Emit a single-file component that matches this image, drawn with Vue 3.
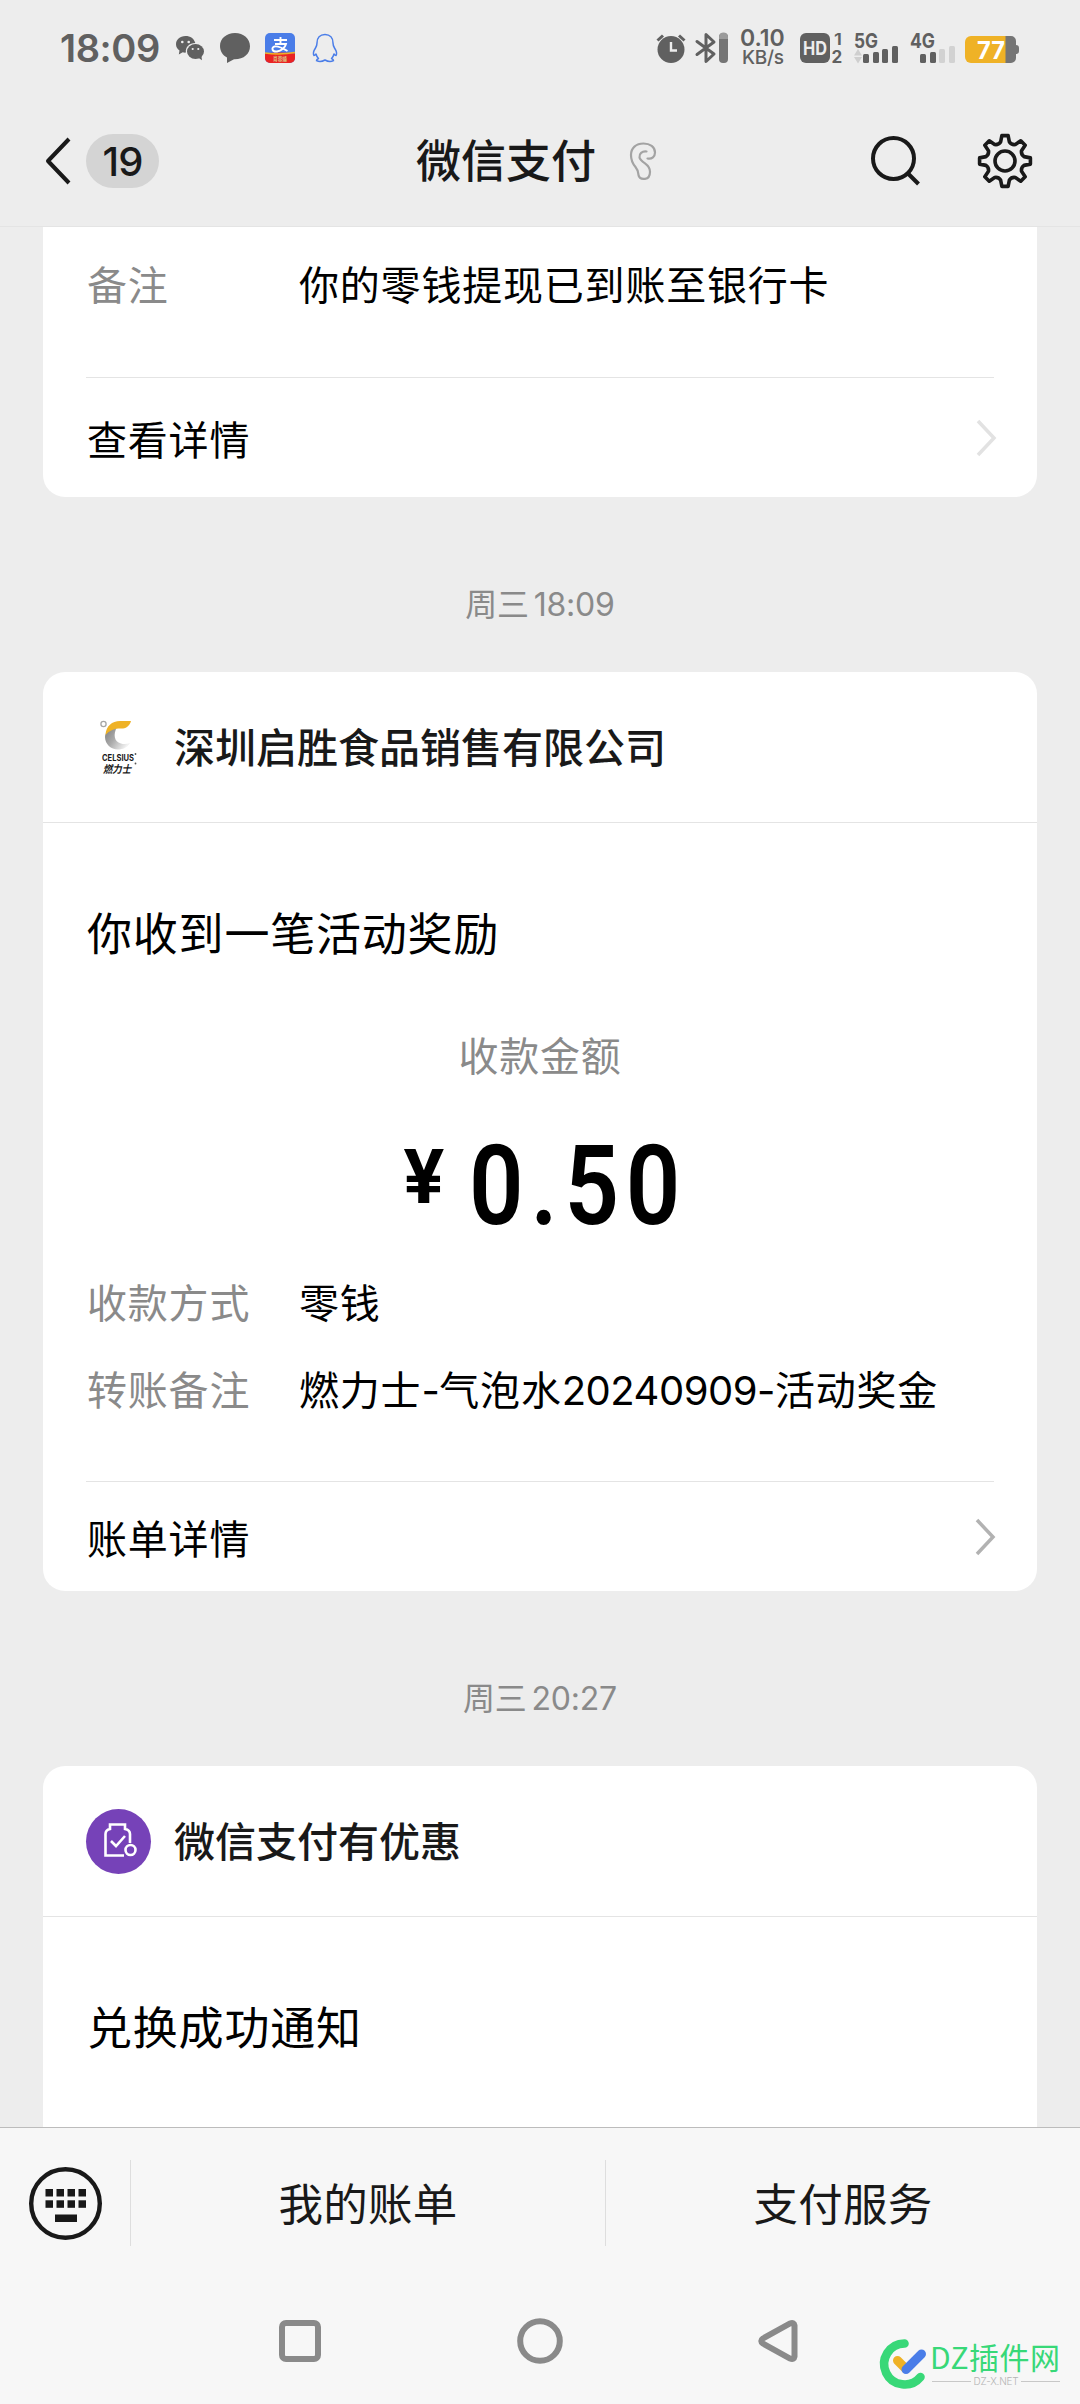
<script setup>
const signalBars = [
  { x: 9, h: 9 },
  { x: 19, h: 11 },
  { x: 28, h: 14 },
  { x: 38, h: 17 },
]
const keys = [0, 1, 2, 3].flatMap((c) => [0, 1].map((r) => ({ x: 16.5 + c * 11, y: 22 + r * 11.3 })))

// Outline of the settings cog: eight rounded teeth around the centre (28, 28).
const teeth = 8
const point = (radius, degrees) => {
  const a = (degrees * Math.PI) / 180
  return `${(28 + radius * Math.sin(a)).toFixed(2)} ${(28 - radius * Math.cos(a)).toFixed(2)}`
}
const gearPath =
  Array.from({ length: teeth }, (_, i) => {
    const a = (i * 360) / teeth
    return `${i ? 'L' : 'M'}${point(19.5, a - 13)} L${point(25.6, a - 7)} L${point(25.6, a + 7)} L${point(19.5, a + 13)} Q${point(17.2, a + 22.5)} ${point(19.5, a + 32)}`
  }).join(' ') + 'Z'

const payment = [
  { label: '收款方式', value: '零钱' },
  { label: '转账备注', value: '燃力士-气泡水20240909-活动奖金' },
]
// Latin runs are set tighter than the Chinese text around them.
const runs = (text) => text.split(/([-\d]+)/).filter(Boolean).map((t) => ({ t, latin: /^[-\d]/.test(t) }))
</script>

<template>
  <div class="screen">
    <header class="top">
      <div class="status">
        <div class="status-left">
          <span class="clock">18:09</span>
          <svg class="s-wechat" width="30" height="30" viewBox="0 0 30 30">
            <path d="M10.5 3C4.700 3 1 6.800 1 11.200c0 2.700 1.300 4.800 3.500 6.400L3.800 21.500l3.900-2.200c1 .3 2 .4 3.200.3C10.200 14 14.500 10 20.300 10 19 5.500 15.500 3 10.500 3z" fill="#606060" />
            <ellipse cx="20.500" cy="18.500" rx="8.500" ry="7.500" fill="#606060" />
            <path d="M23 24.500l4 2.800-.6-4.300z" fill="#606060" />
            <g fill="#ededed"><circle cx="7.300" cy="9" r="1.300" /><circle cx="13.700" cy="9" r="1.300" /><circle cx="17.700" cy="16" r="1.100" /><circle cx="23.300" cy="16" r="1.100" /></g>
          </svg>
          <svg class="s-chat" width="30" height="30" viewBox="0 0 30 30">
            <path d="M15 0C6.500 0 0 5.500 0 13c0 5 2.600 9.300 7 11.500V30l7-3.800C23.500 26.500 30 21 30 13.200 30 5.500 23.500 0 15 0z" fill="#606060" />
          </svg>
          <svg class="s-alipay" width="30" height="30" viewBox="0 0 30 30">
            <rect width="30" height="30" rx="5" fill="#4a7de8" />
            <path d="M0 20.500Q15 18.500 30 20.500V25a5 5 0 0 1-5 5H5a5 5 0 0 1-5-5z" fill="#ea2323" />
            <path d="M0 20Q15 22 30 19.500" fill="none" stroke="#efb226" stroke-width="1.500" />
            <path d="M9 7h13M15.500 4v7M10 11h11c-1 4-5 7-9 7.500-5 .5-6-4-2.500-5 4-1 8 1.500 13 4.500" fill="none" stroke="#fff" stroke-width="1.900" />
            <text x="8" y="27.500" font-size="6" textLength="14" lengthAdjust="spacingAndGlyphs" font-weight="700" fill="#dcb77c">肖蓉蛹</text>
          </svg>
          <svg class="s-qq" width="26" height="30" viewBox="0 0 26 30">
            <path d="M13 1.500C8 1.500 5 5 5 10c0 2-.5 3.500-1.500 5C1.500 18 1 21 2 22.500c.8 0 1.500-.8 2-1.500.5 2 1 3.200 2.500 4.500-1.500.6-2 1.200-2 2.200 2 1 6 .8 8.500-.7 2.500 1.500 6.500 1.700 8.500.7 0-1-.5-1.600-2-2.200 1.500-1.300 2-2.500 2.500-4.500.5.7 1.200 1.500 2 1.500 1-1.500.5-4.500-1.500-7.500-1-1.500-1.500-3-1.500-5 0-5-3-8.500-8-8.500z" fill="none" stroke="#4a7de8" stroke-width="1.500" stroke-linejoin="round" />
          </svg>
        </div>
        <div class="status-right">
          <svg width="30" height="30" viewBox="0 0 30 30">
            <circle cx="15" cy="16.500" r="13.500" fill="#606060" />
            <path d="M1.500 7.500L7 2.500M28.500 7.500L23 2.500" stroke="#606060" stroke-width="3" />
            <path d="M15 9v8.500h6" fill="none" stroke="#ededed" stroke-width="2.400" />
          </svg>
          <svg class="s-bt" width="33" height="30" viewBox="0 0 33 30">
            <path d="M2 8.500L19 21l-8 7.500v-27L19 9 2 21.500" fill="none" stroke="#606060" stroke-width="3" stroke-linejoin="round" stroke-linecap="round" />
            <rect x="24" y="0" width="9" height="30" rx="4" fill="#757575" />
            <path d="M24 6V4a4 4 0 0 1 9 0v2z" fill="#9b9b9b" />
          </svg>
          <div class="speed"><span>0.10</span><span class="unit">KB/s</span></div>
          <svg class="s-hd" width="43" height="32" viewBox="0 0 43 32">
            <rect width="30" height="30" rx="6" fill="#606060" />
            <text x="3" y="22" font-size="19" font-weight="700" textLength="24" lengthAdjust="spacingAndGlyphs" fill="#ededed">HD</text>
            <text x="34" y="12" font-size="16" font-weight="600" textLength="8" lengthAdjust="spacingAndGlyphs" fill="#606060">1</text>
            <text x="31.500" y="29.500" font-size="17" font-weight="700" fill="#606060">2</text>
          </svg>
          <svg class="s-sim" width="46" height="32" viewBox="0 0 46 32">
            <text x="0" y="14.500" font-size="20" font-weight="700" textLength="24" lengthAdjust="spacingAndGlyphs" fill="#606060">5G</text>
            <path d="M0 22.500L4 16l4 6.500zM0 24l4 6.500L8 24z" fill="#cfcfcf" />
            <rect v-for="b in signalBars" :key="b.x" :x="b.x" :y="30 - b.h" width="6" :height="b.h" rx="1.500" fill="#606060" />
          </svg>
          <svg class="s-sim2" width="46" height="32" viewBox="0 0 46 32">
            <text x="0" y="14.500" font-size="20" font-weight="700" textLength="25" lengthAdjust="spacingAndGlyphs" fill="#606060">4G</text>
            <rect v-for="(b, i) in signalBars" :key="b.x" :x="b.x + 1" :y="30 - b.h" width="6" :height="b.h" rx="1.500" :fill="i < 2 ? '#606060' : '#d2d2d2'" />
          </svg>
          <svg class="s-bat" width="55" height="30" viewBox="0 0 55 30">
            <path d="M40 3h6a5 5 0 0 1 5 5v4q3 0 3 3v3q0 3-3 3v4a5 5 0 0 1-5 5h-6z" fill="#757575" />
            <path d="M6 3h34.500v27H6a6 6 0 0 1-6-6V9a6 6 0 0 1 6-6z" fill="#efb226" />
            <text x="12" y="25.500" font-size="24" font-weight="700" textLength="28" lengthAdjust="spacingAndGlyphs" fill="#fff">77</text>
          </svg>
        </div>
      </div>
      <div class="nav">
        <div class="nav-left">
          <svg width="26" height="48" viewBox="0 0 26 48"><path d="M24 2L3 24l21 22" fill="none" stroke="#191919" stroke-width="4" stroke-linejoin="round" /></svg>
          <span class="badge">19</span>
        </div>
        <div class="nav-title">
          <h1>微信支付</h1>
          <svg width="28" height="40" viewBox="0 0 28 40">
            <path d="M10.500 16.500C10 12.500 13 10 17.500 10.500M18.500 17.500C23 18.500 26 15.500 26 11.500 26 6 21 2.500 14.500 2.500 7 2.500 2 7 2 14c0 5 1.500 8.500 4.500 12 2.500 3 2.500 5 3 8 .5 3 3 4.200 6.500 3.800 3.500-.3 5-3 5-7 0-4.300-2-6.300-5-8.500-3-2-5-3.500-5.500-5.800" fill="none" stroke="#a3a3a3" stroke-width="2.200" stroke-linecap="round" />
          </svg>
        </div>
        <div class="nav-right">
          <svg width="52" height="52" viewBox="0 0 52 52"><circle cx="23.500" cy="23.500" r="20.500" fill="none" stroke="#191919" stroke-width="4" /><path d="M37.500 38L48.500 49" stroke="#191919" stroke-width="4" /></svg>
          <svg width="56" height="56" viewBox="0 0 56 56"><path :d="gearPath" fill="none" stroke="#191919" stroke-width="3.600" stroke-linejoin="round" /><circle cx="28" cy="28" r="10" fill="none" stroke="#191919" stroke-width="3.600" /></svg>
        </div>
      </div>
    </header>

    <main class="feed">
      <section class="card card-cut">
        <div class="row note"><span class="label">备注</span><span>你的零钱提现已到账至银行卡</span></div>
        <div class="link link-tall">
          <span>查看详情</span>
          <svg class="arrow faint" width="22" height="40" viewBox="0 0 22 40"><path d="M2 3l16 17L2 37" /></svg>
        </div>
      </section>

      <time class="stamp">周三 18:09</time>

      <section class="card">
        <div class="head">
          <svg width="65" height="65" viewBox="0 0 65 65">
            <defs><linearGradient id="swoosh" x1="0" x2="1" y1="0" y2=".6"><stop offset="0" stop-color="#7c7c7c" /><stop offset=".5" stop-color="#ababab" /><stop offset="1" stop-color="#f1f1f1" /></linearGradient></defs>
            <circle cx="17.500" cy="9" r="2.600" fill="none" stroke="#a6a6a6" stroke-width="1.300" />
            <path d="M31 12C24 13 19 17 19 22c0 7 6 12.500 13 12.500 5 0 9-2 12-6.500-3 1-6 1.500-9 .5-7-2-8-9-4-16.500z" fill="url(#swoosh)" />
            <path d="M19.500 20C20 11 26 6 34 6h11c-1 4-4 7-8 7.500-7-.5-13 1-17.500 6.500z" fill="#efb226" />
            <text x="16" y="46" font-size="9" font-weight="700" textLength="32" lengthAdjust="spacingAndGlyphs" fill="#191919">CELSIUS</text>
            <text x="17" y="57.500" font-size="10.500" font-weight="700" font-style="italic" textLength="28" lengthAdjust="spacingAndGlyphs" fill="#191919">燃力士</text>
            <circle cx="49.500" cy="39" r=".9" fill="#555" /><circle cx="49.500" cy="48.500" r=".9" fill="#555" />
          </svg>
          <h2>深圳启胜食品销售有限公司</h2>
        </div>
        <h3>你收到一笔活动奖励</h3>
        <p class="caption">收款金额</p>
        <p class="amount"><span class="yen">¥</span><span class="figure">0.50</span></p>
        <div v-for="r in payment" :key="r.label" class="row">
          <span class="label">{{ r.label }}</span>
          <span><span v-for="(run, i) in runs(r.value)" :key="i" :class="{ latin: run.latin }">{{ run.t }}</span></span>
        </div>
        <div class="link link-short">
          <span>账单详情</span>
          <svg class="arrow" width="22" height="40" viewBox="0 0 22 40"><path d="M2 3l16 17L2 37" /></svg>
        </div>
      </section>

      <time class="stamp">周三 20:27</time>

      <section class="card card-last">
        <div class="head">
          <svg width="65" height="65" viewBox="0 0 65 65">
            <circle cx="32.500" cy="32.500" r="32.500" fill="#7642b8" />
            <g fill="none" stroke="#fff" stroke-width="2.600">
              <path d="M38 46.500H19.500V25q0-4 4.500-5v-4.500h15V20q5 1 5 5v9" />
              <path d="M25 32l5 5 9-10" /><circle cx="44.500" cy="41" r="5" />
            </g>
          </svg>
          <h2>微信支付有优惠</h2>
        </div>
        <h3>兑换成功通知</h3>
      </section>
    </main>

    <footer class="bottom">
      <div class="menu">
        <div class="toggle">
          <svg width="73" height="73" viewBox="0 0 73 73">
            <circle cx="36.500" cy="36.500" r="34.300" fill="none" stroke="#191919" stroke-width="4.400" />
            <rect v-for="k in keys" :key="`${k.x}-${k.y}`" :x="k.x" :y="k.y" width="7.500" height="7.500" fill="#191919" />
            <rect x="26" y="47.500" width="22" height="7.500" fill="#191919" />
          </svg>
        </div>
        <div class="item">我的账单</div>
        <div class="item">支付服务</div>
      </div>
      <div class="keys">
        <svg width="48" height="48" viewBox="0 0 48 48"><rect x="6" y="6" width="36" height="36" rx="4" /></svg>
        <svg width="48" height="48" viewBox="0 0 48 48"><circle cx="24" cy="24" r="19.800" /></svg>
        <svg width="48" height="48" viewBox="0 0 48 48"><path d="M7 21.500L34 6.500q4-1.500 4.500 2v31q-.5 3.500-4.500 2L7 26.500q-3.500-2.500 0-5z" /></svg>
      </div>
      <div class="brand">
        <svg width="52" height="54" viewBox="0 0 52 54">
          <g fill="none" stroke-linecap="round">
            <path d="M26.500 6.500A20.500 20.500 0 1 0 42.500 40" stroke="#38d878" stroke-width="8.600" />
            <path d="M19.500 23.500l8 8" stroke="#efb226" stroke-width="9" />
            <path d="M28 32.500L43.500 17" stroke="#4a7de8" stroke-width="9" />
          </g>
        </svg>
        <div class="brand-text">
          <span class="brand-name">DZ插件网</span>
          <span class="brand-sub">DZ-X.NET</span>
        </div>
      </div>
    </footer>
  </div>
</template>

<style>
body {
  background: #ededed;
}
</style>

<style scoped>
.screen {
  display: flex;
  flex-direction: column;
  width: 1080px;
  height: 2404px;
  overflow: hidden;
  background: #ededed;
  color: #000;
  font-family: Inter, "Noto Sans CJK SC", sans-serif;
  font-size: 40px;
  letter-spacing: 0.8px;
}
svg {
  display: block;
  flex: none;
  overflow: visible;
  letter-spacing: 0;
}
h1, h2, h3, p {
  margin: 0;
  font-weight: 400;
}
.top {
  box-sizing: border-box;
  flex: none;
  height: 227px;
  border-bottom: 1px solid #e4e4e4;
}
.status {
  display: flex;
  justify-content: space-between;
  box-sizing: border-box;
  height: 96px;
  padding: 0 60px;
  color: #606060;
}
.status-left, .status-right {
  display: flex;
  align-items: center;
}
.clock {
  width: 115px;
  font-size: 38px;
  font-weight: 600;
  letter-spacing: -0.4px;
}
.s-chat { margin-left: 15px; }
.s-alipay { margin-left: 15px; }
.s-qq { margin-left: 17px; }
.s-bt { margin-left: 9px; }
.speed {
  display: flex;
  flex-direction: column;
  width: 46px;
  margin: -2px 0 0 12px;
  font-size: 23px;
  font-weight: 600;
  line-height: 20px;
  letter-spacing: 0;
}
.speed .unit {
  padding-left: 2px;
  font-size: 19px;
  font-weight: 500;
  line-height: 19px;
  letter-spacing: -0.3px;
}
.s-hd { margin: 2px 0 0 14px; }
.s-sim { margin: 2px 0 0 11px; }
.s-sim2 { margin: 2px 0 0 10px; }
.s-bat { margin-left: 9px; }
.nav {
  display: grid;
  grid-template-columns: 400px 1fr 200px;
  align-items: center;
  height: 130px;
}
.nav-left {
  display: flex;
  align-items: center;
  padding-left: 45px;
}
.badge {
  width: 73px;
  height: 54px;
  margin-left: 15px;
  border-radius: 27px;
  background: #d4d4d4;
  color: #191919;
  font-size: 40px;
  font-weight: 500;
  line-height: 56px;
  letter-spacing: -0.8px;
  text-align: center;
}
.nav-title {
  display: flex;
  align-items: center;
  padding-left: 16px;
}
h1 {
  width: 213px;
  padding-top: 2px;
  color: #191919;
  font-size: 45px;
  font-weight: 500;
  letter-spacing: 0;
  line-height: 60px;
}
.nav-right {
  display: flex;
  align-items: center;
  justify-content: flex-end;
  gap: 55px;
  padding-right: 47px;
}
.feed {
  display: flex;
  flex: 1;
  flex-direction: column;
  min-height: 0;
  overflow: hidden;
}
.card {
  flex: none;
  margin: 0 43px;
  border-radius: 22px;
  background: #fff;
}
.card-cut {
  border-radius: 0 0 22px 22px;
}
.card-last {
  border-radius: 22px 22px 0 0;
  padding-bottom: 100px;
}
.row {
  display: flex;
  height: 87px;
  padding-left: 44px;
  line-height: 87px;
}
.label {
  width: 212px;
  color: #8a8a8a;
}
.latin {
  letter-spacing: -0.5px;
}
.note {
  height: 150px;
  line-height: 118px;
}
.link {
  display: flex;
  align-items: center;
  justify-content: space-between;
  box-sizing: border-box;
  margin: 0 43px;
  padding: 0 0 0 1px;
  border-top: 1px solid #e4e4e4;
}
.link-tall { height: 120px; }
.link-short { height: 110px; margin-top: 47px; }
.arrow {
  margin-right: -3px;
  fill: none;
  stroke: #b2b2b2;
  stroke-width: 3.500;
}
.arrow.faint { stroke: #e2e2e2; margin-right: -4px; }
.stamp {
  flex: none;
  height: 175px;
  color: #8a8a8a;
  font-size: 32px;
  letter-spacing: -0.2px;
  word-spacing: -4px;
  line-height: 216px;
  text-align: center;
}
.head {
  display: flex;
  align-items: center;
  gap: 23px;
  box-sizing: border-box;
  height: 151px;
  padding-left: 43px;
  border-bottom: 1px solid #e4e4e4;
}
h2 {
  padding-bottom: 4px;
  color: #191919;
  font-size: 41px;
  font-weight: 500;
  letter-spacing: 0;
}
h3 {
  height: 160px;
  padding: 62px 0 0 44px;
  box-sizing: border-box;
  font-size: 45px;
  line-height: 100px;
}
.caption {
  height: 76px;
  margin-top: 35px;
  color: #8a8a8a;
  line-height: 78px;
  text-align: center;
}
.amount {
  display: flex;
  justify-content: center;
  height: 166px;
  font-family: Roboto, sans-serif;
  font-weight: 500;
  letter-spacing: 0;
}
.yen {
  width: 46px;
  margin-right: 19px;
  font-size: 76px;
  font-weight: 700;
  line-height: 166px;
}
.figure {
  width: 208px;
  font-size: 111px;
  font-weight: 600;
  line-height: 184px;
  letter-spacing: 8px;
  transform: scaleX(0.86);
  transform-origin: left;
}
.bottom {
  position: relative;
  box-sizing: border-box;
  flex: none;
  height: 277px;
  border-top: 1px solid #bcbcbc;
  background: #f7f7f7;
}
.menu {
  display: flex;
  height: 150px;
  align-items: center;
}
.toggle {
  width: 101px;
  padding-left: 29px;
}
.item {
  box-sizing: border-box;
  width: 475px;
  height: 86px;
  border-left: 1px solid #dedede;
  color: #191919;
  font-size: 44.500px;
  letter-spacing: 0.3px;
  line-height: 91px;
  text-align: center;
}
.keys {
  display: flex;
  gap: 192px;
  padding: 39px 0 0 276px;
}
.keys svg {
  fill: none;
  stroke: #8a8a8a;
  stroke-width: 6;
}
.brand {
  position: absolute;
  left: 878px;
  top: 209px;
  display: flex;
}
.brand-text {
  display: flex;
  flex-direction: column;
  width: 132px;
  font-family: "Noto Sans CJK SC", sans-serif;
}
.brand-name {
  color: #38d878;
  font-size: 30px;
  line-height: 38px;
  letter-spacing: 0.5px;
  white-space: nowrap;
}
.brand-sub {
  display: flex;
  align-items: center;
  gap: 3px;
  width: 128px;
  margin: 1px 0 0 2px;
  color: #b4b4b4;
  font-family: Inter, sans-serif;
  font-size: 10px;
  font-weight: 300;
  line-height: 10px;
  letter-spacing: -0.2px;
  white-space: nowrap;
}
.brand-sub::before, .brand-sub::after {
  content: "";
  flex: 1;
  height: 1px;
  background: #c8c8c8;
}
</style>
